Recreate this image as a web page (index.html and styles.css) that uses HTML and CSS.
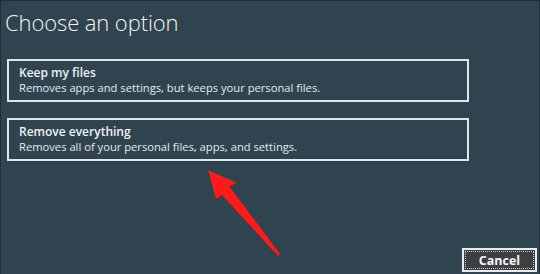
FILE: index.html
```html
<!DOCTYPE html>
<html lang="en">
<head>
    <meta charset="UTF-8">
    <meta name="viewport" content="width=device-width, initial-scale=1.0">
    <title>Choose an option</title>
    <link rel="stylesheet" href="styles.css">
</head>
<body>
    <div class="screen">
        <h1 class="heading">Choose an option</h1>
        <div class="options">
            <button class="option">
                <span class="option-title">Keep my files</span>
                <span class="option-desc">Removes apps and settings, but keeps your personal files.</span>
            </button>
            <button class="option">
                <span class="option-title">Remove everything</span>
                <span class="option-desc">Removes all of your personal files, apps, and settings.</span>
            </button>
        </div>
        <div class="footer">
            <button class="cancel"><span class="cancel-label">Cancel</span></button>
        </div>

        <!-- annotation arrow -->
        <svg class="arrow" width="80" height="90" viewBox="0 0 80 90">
            <polygon points="0,0 29,13 21,16 72,84 70,86 14,25 8,29" fill="#ff1a1a"/>
        </svg>
    </div>
</body>
</html>
```

FILE: styles.css
```css
html, body {
    margin: 0;
    padding: 0;
}
body {
    font-family: "Open Sans", "Noto Sans", Arial, sans-serif;
    background-color: #30444f;
    color: #eef2f4;
}
.screen {
    position: relative;
    width: 540px;
    height: 274px;
    box-sizing: border-box;
    border: 1px solid #1f2d35;
    border-bottom: none;
    padding: 0 2px 0 6px;
    display: flex;
    flex-direction: column;
}
.heading {
    margin: 5px 0 0 -2px;
    font-size: 22px;
    font-weight: 300;
    line-height: 32px;
    letter-spacing: -0.1px;
    color: #f2f5f7;
}
.options {
    display: flex;
    flex-direction: column;
    gap: 16px;
    margin-top: 21px;
}
.option {
    width: 462px;
    height: 43px;
    box-sizing: border-box;
    border: 2px solid #dfe6ea;
    background: transparent;
    color: #eef2f4;
    padding: 4px 0 0 10px;
    text-align: left;
    font-family: inherit;
    display: flex;
    flex-direction: column;
}
.option-title {
    font-size: 12px;
    font-weight: 600;
    line-height: 15px;
}
.option-desc {
    font-size: 11.2px;
    line-height: 16px;
    color: #e4eaed;
}
.footer {
    margin-top: auto;
    display: flex;
    justify-content: flex-end;
    padding-bottom: 2px;
}
.cancel {
    width: 75px;
    height: 24px;
    box-sizing: border-box;
    border: 2px solid #e8ecee;
    background-color: #3d3f41;
    padding: 1px;
    font-family: inherit;
}
.cancel-label {
    display: flex;
    align-items: center;
    justify-content: center;
    height: 100%;
    box-sizing: border-box;
    border: 1px dotted #c8cccf;
    color: #f4f6f7;
    font-size: 12.5px;
    font-weight: 700;
}
.arrow {
    position: absolute;
    left: 207px;
    top: 169px;
}
```
